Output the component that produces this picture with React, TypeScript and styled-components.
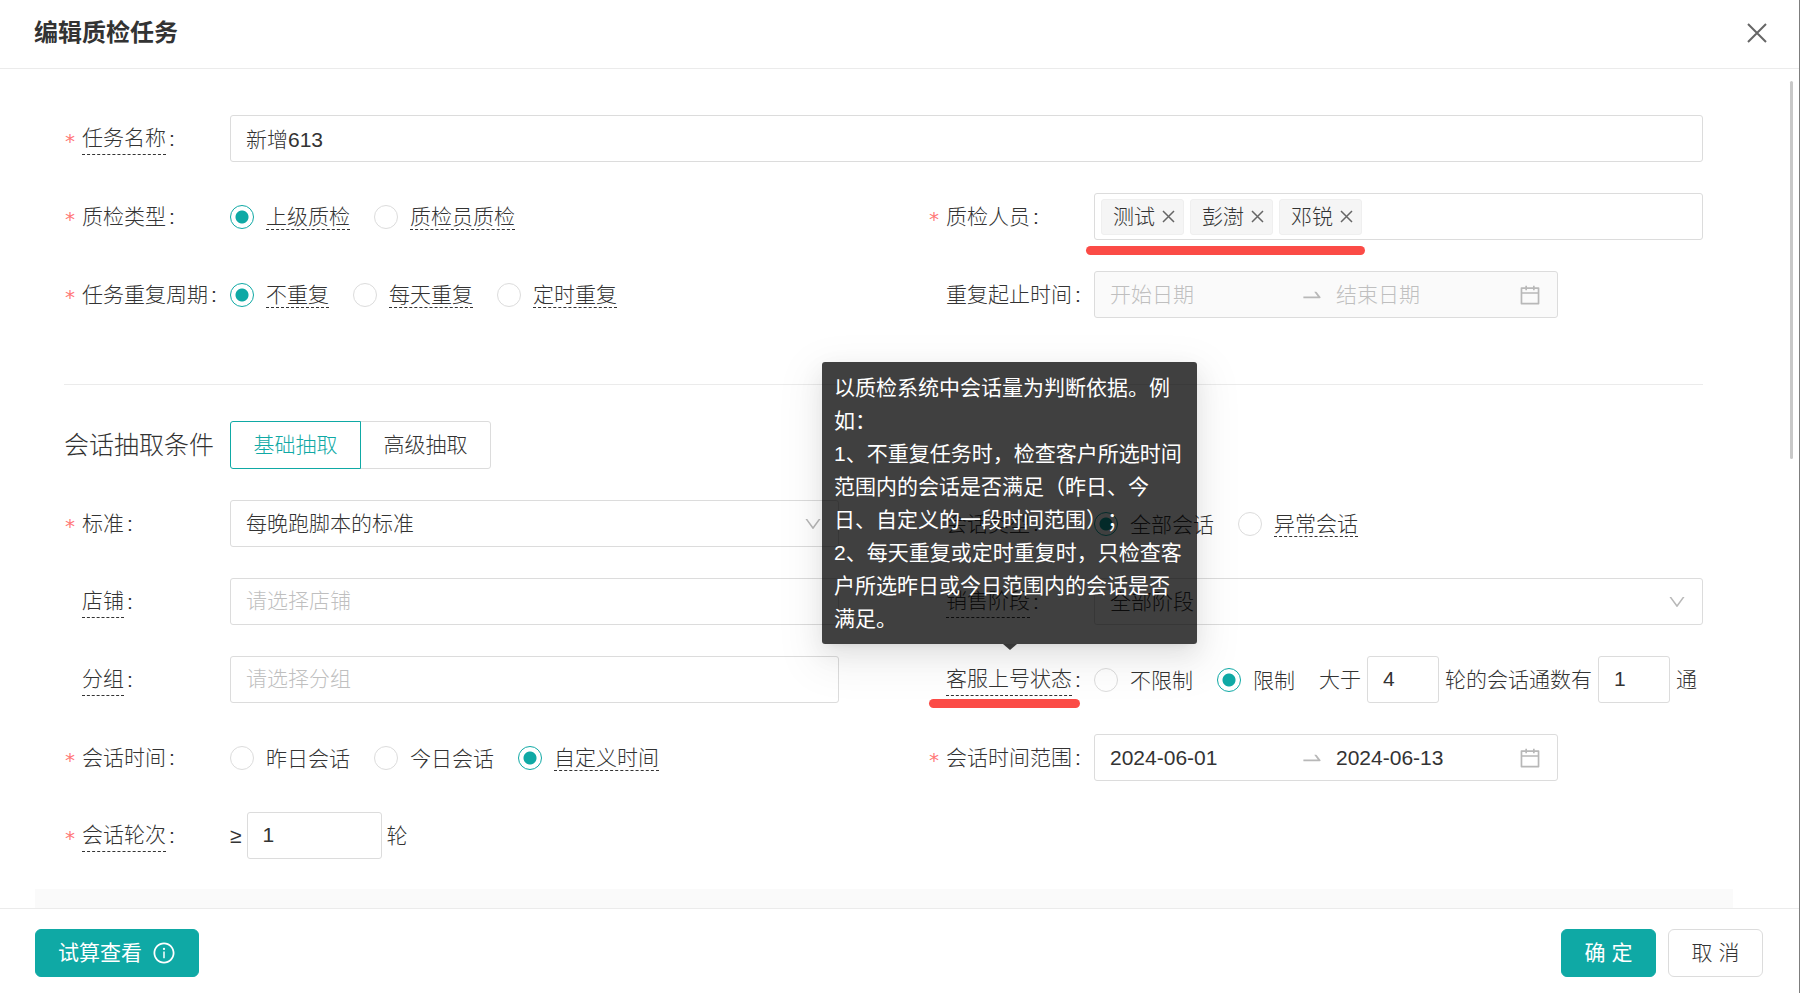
import React, { useId, useState } from 'react';
import styled, { createGlobalStyle, css } from 'styled-components';
import {
  AiOutlineCalendar,
  AiOutlineDown,
  AiOutlineInfoCircle,
  AiOutlineSwapRight,
} from 'react-icons/ai';

const teal = '#0fa9a5';
const text = '#333';
const line = '#dcdcdc';
const hint = '#bfbfbf';
const mark = '#fb4b46';

const GlobalStyle = createGlobalStyle`
  * { box-sizing: border-box; }
  body {
    margin: 0;
    background: #fff;
    color: ${text};
    font-family: "Liberation Sans", "Noto Sans CJK SC", sans-serif;
    font-size: 21px;
    font-weight: 300;
    line-height: 32px;
  }
  input, select, button {
    font: inherit;
    color: inherit;
    margin: 0;
  }
`;

const Page = styled.div`
  display: flex;
  flex-direction: column;
  height: 100vh;
  border-right: 1px solid #7d7d7d;
`;

const Header = styled.header`
  display: flex;
  align-items: center;
  justify-content: space-between;
  padding: 17px 32px 19px 34px;
  border-bottom: 1px solid #ebebeb;
`;

const Title = styled.h1`
  margin: 0;
  font-size: 24px;
  line-height: 32px;
  font-weight: 700;
`;

const IconButton = styled.button`
  display: flex;
  padding: 0;
  border: 0;
  background: none;
  color: #666;
  cursor: pointer;
`;

const Main = styled.main`
  position: relative;
  flex: 1;
  min-height: 0;
`;

const Scroller = styled.div`
  height: 100%;
  overflow-y: auto;
  scrollbar-width: none;
  padding: 46px 66px 0 35px;
`;

const ScrollThumb = styled.div`
  position: absolute;
  top: 12px;
  right: 6px;
  width: 3px;
  height: 45%;
  border-radius: 2px;
  background: #c8c8c8;
`;

const Section = styled.section`
  display: grid;
  grid-template-columns: 1fr 1fr;
  gap: 31px 89px;
  margin: 0 30px 0 29px;
`;

const Divider = styled.hr`
  height: 1px;
  margin: 66px 30px 36px 29px;
  border: 0;
  background: #ebebeb;
`;

const NextPanel = styled.div`
  height: 160px;
  margin-top: 30px;
  background: #fafafa;
`;

const Field = styled.div<{ $wide?: boolean }>`
  display: grid;
  grid-template-columns: 166px 1fr;
  align-items: center;
  min-height: 47px;
  ${(p) => p.$wide && css`grid-column: 1 / -1;`}
`;

const LabelCell = styled.div`
  display: flex;
  align-items: center;
  white-space: nowrap;
`;

const Star = styled.span`
  width: 18px;
  height: 21px;
  color: #ff7878;
  font-family: "DejaVu Sans Mono", monospace;
  font-size: 20px;
  line-height: 26px;
`;

const LabelText = styled.label<{ $dashed?: boolean }>`
  position: relative;
  ${(p) => p.$dashed && css`border-bottom: 1px dashed ${text};`}
`;

const Colon = styled.span`
  margin-left: 3px;
`;

const Control = styled.div<{ $gap?: number }>`
  position: relative;
  display: flex;
  align-items: center;
  gap: ${(p) => p.$gap ?? 0}px;
  min-width: 0;
  white-space: nowrap;
`;

const TextInput = styled.input<{ $width?: number }>`
  width: ${(p) => (p.$width ? `${p.$width}px` : '100%')};
  height: 47px;
  padding: 0 15px 2px;
  border: 1px solid ${line};
  border-radius: 3px;
  background: #fff;
  outline: none;
  &::placeholder { color: ${hint}; opacity: 1; }
`;

const SelectBox = styled.select`
  width: 100%;
  height: 47px;
  padding: 0 44px 0 15px;
  border: 1px solid ${line};
  border-radius: 3px;
  background: #fff;
  appearance: none;
  outline: none;
`;

const SelectArrow = styled(AiOutlineDown)`
  position: absolute;
  right: 16px;
  color: #b8b8b8;
  pointer-events: none;
`;

const RadioLabel = styled.label`
  display: flex;
  align-items: center;
  gap: 12px;
  cursor: pointer;
`;

const RadioInput = styled.input`
  flex: none;
  width: 24px;
  height: 24px;
  border: 1px solid ${line};
  border-radius: 50%;
  background: #fff;
  appearance: none;
  &:checked {
    border-color: ${teal};
    background: radial-gradient(circle, ${teal} 6px, #fff 7px);
  }
`;

const RadioText = styled.span<{ $dashed?: boolean }>`
  padding-top: 2px;
  line-height: 24px;
  ${(p) => p.$dashed && css`border-bottom: 1px dashed ${text};`}
`;

const TagBox = styled.div`
  display: flex;
  align-items: center;
  gap: 6px;
  width: 100%;
  height: 47px;
  padding: 0 6px;
  border: 1px solid ${line};
  border-radius: 3px;
`;

const Tag = styled.span`
  display: flex;
  align-items: center;
  gap: 7px;
  height: 36px;
  padding: 0 8px 0 11px;
  border: 1px solid #efefef;
  border-radius: 3px;
  background: #f5f5f5;
`;

const RangeBox = styled.div<{ $disabled?: boolean }>`
  display: flex;
  align-items: center;
  width: 464px;
  height: 47px;
  padding: 0 15px;
  border: 1px solid ${line};
  border-radius: 3px;
  background: ${(p) => (p.$disabled ? '#fafafa' : '#fff')};
  svg { flex: none; color: #b8b8b8; }
`;

const RangeInput = styled.input<{ $end?: boolean }>`
  flex: ${(p) => (p.$end ? '0 0 182px' : '1')};
  min-width: 0;
  padding: 0;
  border: 0;
  background: none;
  outline: none;
  &::placeholder { color: ${hint}; opacity: 1; }
`;

const RangeArrow = styled(AiOutlineSwapRight)`
  margin-right: 12px;
`;

const Conditions = styled.div`
  display: flex;
  align-items: center;
  gap: 6px;
  margin-left: 24px;
`;

const SectionTitle = styled.h2`
  margin: 0;
  font-size: 25px;
  line-height: 32px;
  font-weight: 300;
  white-space: nowrap;
`;

const TabButton = styled.button<{ $active?: boolean }>`
  position: relative;
  width: 131px;
  height: 48px;
  padding: 0;
  border: 1px solid ${(p) => (p.$active ? teal : line)};
  border-radius: ${(p) => (p.$active ? '3px 0 0 3px' : '0 3px 3px 0')};
  background: #fff;
  color: ${(p) => (p.$active ? teal : text)};
  z-index: ${(p) => (p.$active ? 1 : 0)};
  cursor: pointer;
  & + & { margin-left: -1px; }
`;

const Tooltip = styled.span`
  position: absolute;
  left: 50%;
  bottom: 51px;
  z-index: 5;
  width: 375px;
  margin-left: -187px;
  padding: 9px 12px;
  border-radius: 3px;
  background: rgba(0, 0, 0, 0.75);
  box-shadow: 0 4px 9px -6px rgba(0, 0, 0, 0.12), 0 9px 24px rgba(0, 0, 0, 0.08),
    0 14px 42px 12px rgba(0, 0, 0, 0.05);
  color: #fff;
  line-height: 33px;
  font-weight: 400;
  white-space: pre-line;
  text-spacing-trim: space-all;
  &::after {
    content: '';
    position: absolute;
    top: 100%;
    left: 50%;
    margin-left: -7px;
    border: 7px solid transparent;
    border-top: 6px solid rgba(0, 0, 0, 0.75);
    border-bottom: 0;
  }
`;

const PeopleMark = styled.span`
  position: absolute;
  left: -8px;
  top: 53px;
  width: 279px;
  height: 9px;
  border-radius: 5px;
  background: ${mark};
`;

const LabelMark = styled.span`
  position: absolute;
  left: -17px;
  right: -8px;
  top: 36px;
  height: 9px;
  border-radius: 5px;
  background: ${mark};
`;

const Footer = styled.footer`
  display: flex;
  gap: 12px;
  padding: 20px 36px 16px 35px;
  border-top: 1px solid #ebebeb;
`;

const Button = styled.button<{ $primary?: boolean }>`
  display: flex;
  align-items: center;
  justify-content: center;
  gap: 10px;
  min-width: 95px;
  height: 48px;
  padding: 0 22px;
  border: 1px solid ${(p) => (p.$primary ? teal : line)};
  border-radius: 6px;
  background: ${(p) => (p.$primary ? teal : '#fff')};
  color: ${(p) => (p.$primary ? '#fff' : text)};
  font-weight: ${(p) => (p.$primary ? 400 : 300)};
  white-space: nowrap;
  cursor: pointer;
`;

const Spacer = styled.div`
  flex: 1;
`;

function Cross({ size, weight }: { size: number; weight: number }) {
  return (
    <svg width={size} height={size} viewBox={`0 0 ${size} ${size}`} fill="none" stroke="currentColor" strokeWidth={weight}>
      <path d={`M1 1L${size - 1} ${size - 1}M${size - 1} 1L1 ${size - 1}`} />
    </svg>
  );
}

interface LabelProps {
  name: string;
  htmlFor?: string;
  required?: boolean;
  dashed?: boolean;
  children?: React.ReactNode;
}

function FieldLabel({ name, htmlFor, required, dashed, children }: LabelProps) {
  return (
    <LabelCell>
      <Star>{required ? '*' : ''}</Star>
      <LabelText htmlFor={htmlFor} $dashed={dashed}>
        {name}
        {children}
      </LabelText>
      <Colon>:</Colon>
    </LabelCell>
  );
}

interface Option {
  label: string;
  dashed?: boolean;
}

function RadioGroup({ label, options, initial = 0 }: { label: string; options: Option[]; initial?: number }) {
  const name = useId();
  const [value, setValue] = useState(initial);
  return (
    <Control $gap={24} role="radiogroup" aria-label={label}>
      {options.map((o, i) => (
        <RadioLabel key={o.label}>
          <RadioInput type="radio" name={name} checked={value === i} onChange={() => setValue(i)} />
          <RadioText $dashed={o.dashed}>{o.label}</RadioText>
        </RadioLabel>
      ))}
    </Control>
  );
}

const tip = `以质检系统中会话量为判断依据。例如：
1、不重复任务时，检查客户所选时间范围内的会话是否满足（昨日、今日、自定义的一段时间范围）；
2、每天重复或定时重复时，只检查客户所选昨日或今日范围内的会话是否满足。`;

export default function App() {
  const [tab, setTab] = useState(0);
  const [people, setPeople] = useState(['测试', '彭澍', '邓锐']);

  return (
    <Page>
      <GlobalStyle />
      <Header>
        <Title>编辑质检任务</Title>
        <IconButton type="button" aria-label="关闭">
          <Cross size={20} weight={2} />
        </IconButton>
      </Header>

      <Main>
        <Scroller>
          <Section>
            <Field $wide>
              <FieldLabel name="任务名称" htmlFor="task-name" required dashed />
              <Control>
                <TextInput id="task-name" defaultValue="新增613" />
              </Control>
            </Field>
            <Field>
              <FieldLabel name="质检类型" required />
              <RadioGroup
                label="质检类型"
                options={[{ label: '上级质检', dashed: true }, { label: '质检员质检', dashed: true }]}
              />
            </Field>
            <Field>
              <FieldLabel name="质检人员" required />
              <Control>
                <TagBox>
                  {people.map((p) => (
                    <Tag key={p}>
                      {p}
                      <IconButton
                        type="button"
                        aria-label={`移除${p}`}
                        onClick={() => setPeople(people.filter((q) => q !== p))}
                      >
                        <Cross size={13} weight={1.5} />
                      </IconButton>
                    </Tag>
                  ))}
                </TagBox>
                <PeopleMark />
              </Control>
            </Field>
            <Field>
              <FieldLabel name="任务重复周期" required />
              <RadioGroup
                label="任务重复周期"
                options={[
                  { label: '不重复', dashed: true },
                  { label: '每天重复', dashed: true },
                  { label: '定时重复', dashed: true },
                ]}
              />
            </Field>
            <Field>
              <FieldLabel name="重复起止时间" htmlFor="repeat-start" />
              <RangeBox $disabled>
                <RangeInput id="repeat-start" placeholder="开始日期" disabled />
                <RangeArrow size={24} />
                <RangeInput $end aria-label="结束日期" placeholder="结束日期" disabled />
                <AiOutlineCalendar size={24} />
              </RangeBox>
            </Field>
          </Section>

          <Divider />

          <Section>
            <Field $wide>
              <SectionTitle>会话抽取条件</SectionTitle>
              <Control>
                {['基础抽取', '高级抽取'].map((t, i) => (
                  <TabButton key={t} type="button" $active={tab === i} onClick={() => setTab(i)}>
                    {t}
                  </TabButton>
                ))}
              </Control>
            </Field>
            <Field>
              <FieldLabel name="标准" htmlFor="standard" required />
              <Control>
                <SelectBox id="standard">
                  <option>每晚跑脚本的标准</option>
                </SelectBox>
                <SelectArrow size={20} />
              </Control>
            </Field>
            <Field>
              <FieldLabel name="会话类型" />
              <RadioGroup label="会话类型" options={[{ label: '全部会话' }, { label: '异常会话', dashed: true }]} />
            </Field>
            <Field>
              <FieldLabel name="店铺" htmlFor="shop" dashed />
              <Control>
                <TextInput id="shop" placeholder="请选择店铺" />
              </Control>
            </Field>
            <Field>
              <FieldLabel name="销售阶段" htmlFor="stage" dashed />
              <Control>
                <SelectBox id="stage">
                  <option>全部阶段</option>
                </SelectBox>
                <SelectArrow size={20} />
              </Control>
            </Field>
            <Field>
              <FieldLabel name="分组" htmlFor="group" dashed />
              <Control>
                <TextInput id="group" placeholder="请选择分组" />
              </Control>
            </Field>
            <Field>
              <FieldLabel name="客服上号状态" dashed>
                <LabelMark />
                <Tooltip role="tooltip">{tip}</Tooltip>
              </FieldLabel>
              <Control>
                <RadioGroup label="客服上号状态" initial={1} options={[{ label: '不限制' }, { label: '限制' }]} />
                <Conditions>
                  <label htmlFor="min-rounds">大于</label>
                  <TextInput id="min-rounds" $width={72} defaultValue="4" />
                  <label htmlFor="min-count">轮的会话通数有</label>
                  <TextInput id="min-count" $width={72} defaultValue="1" />
                  <span>通</span>
                </Conditions>
              </Control>
            </Field>
            <Field>
              <FieldLabel name="会话时间" required />
              <RadioGroup
                label="会话时间"
                initial={2}
                options={[{ label: '昨日会话' }, { label: '今日会话' }, { label: '自定义时间', dashed: true }]}
              />
            </Field>
            <Field>
              <FieldLabel name="会话时间范围" htmlFor="range-start" required />
              <RangeBox>
                <RangeInput id="range-start" defaultValue="2024-06-01" />
                <RangeArrow size={24} />
                <RangeInput $end aria-label="结束日期" defaultValue="2024-06-13" />
                <AiOutlineCalendar size={24} />
              </RangeBox>
            </Field>
            <Field>
              <FieldLabel name="会话轮次" htmlFor="rounds" required dashed />
              <Control $gap={5}>
                <span>≥</span>
                <TextInput id="rounds" $width={135} defaultValue="1" />
                <span>轮</span>
              </Control>
            </Field>
          </Section>

          <NextPanel />
        </Scroller>
        <ScrollThumb />
      </Main>

      <Footer>
        <Button type="button" $primary>
          试算查看
          <AiOutlineInfoCircle size={24} />
        </Button>
        <Spacer />
        <Button type="button" $primary>确 定</Button>
        <Button type="button">取 消</Button>
      </Footer>
    </Page>
  );
}
